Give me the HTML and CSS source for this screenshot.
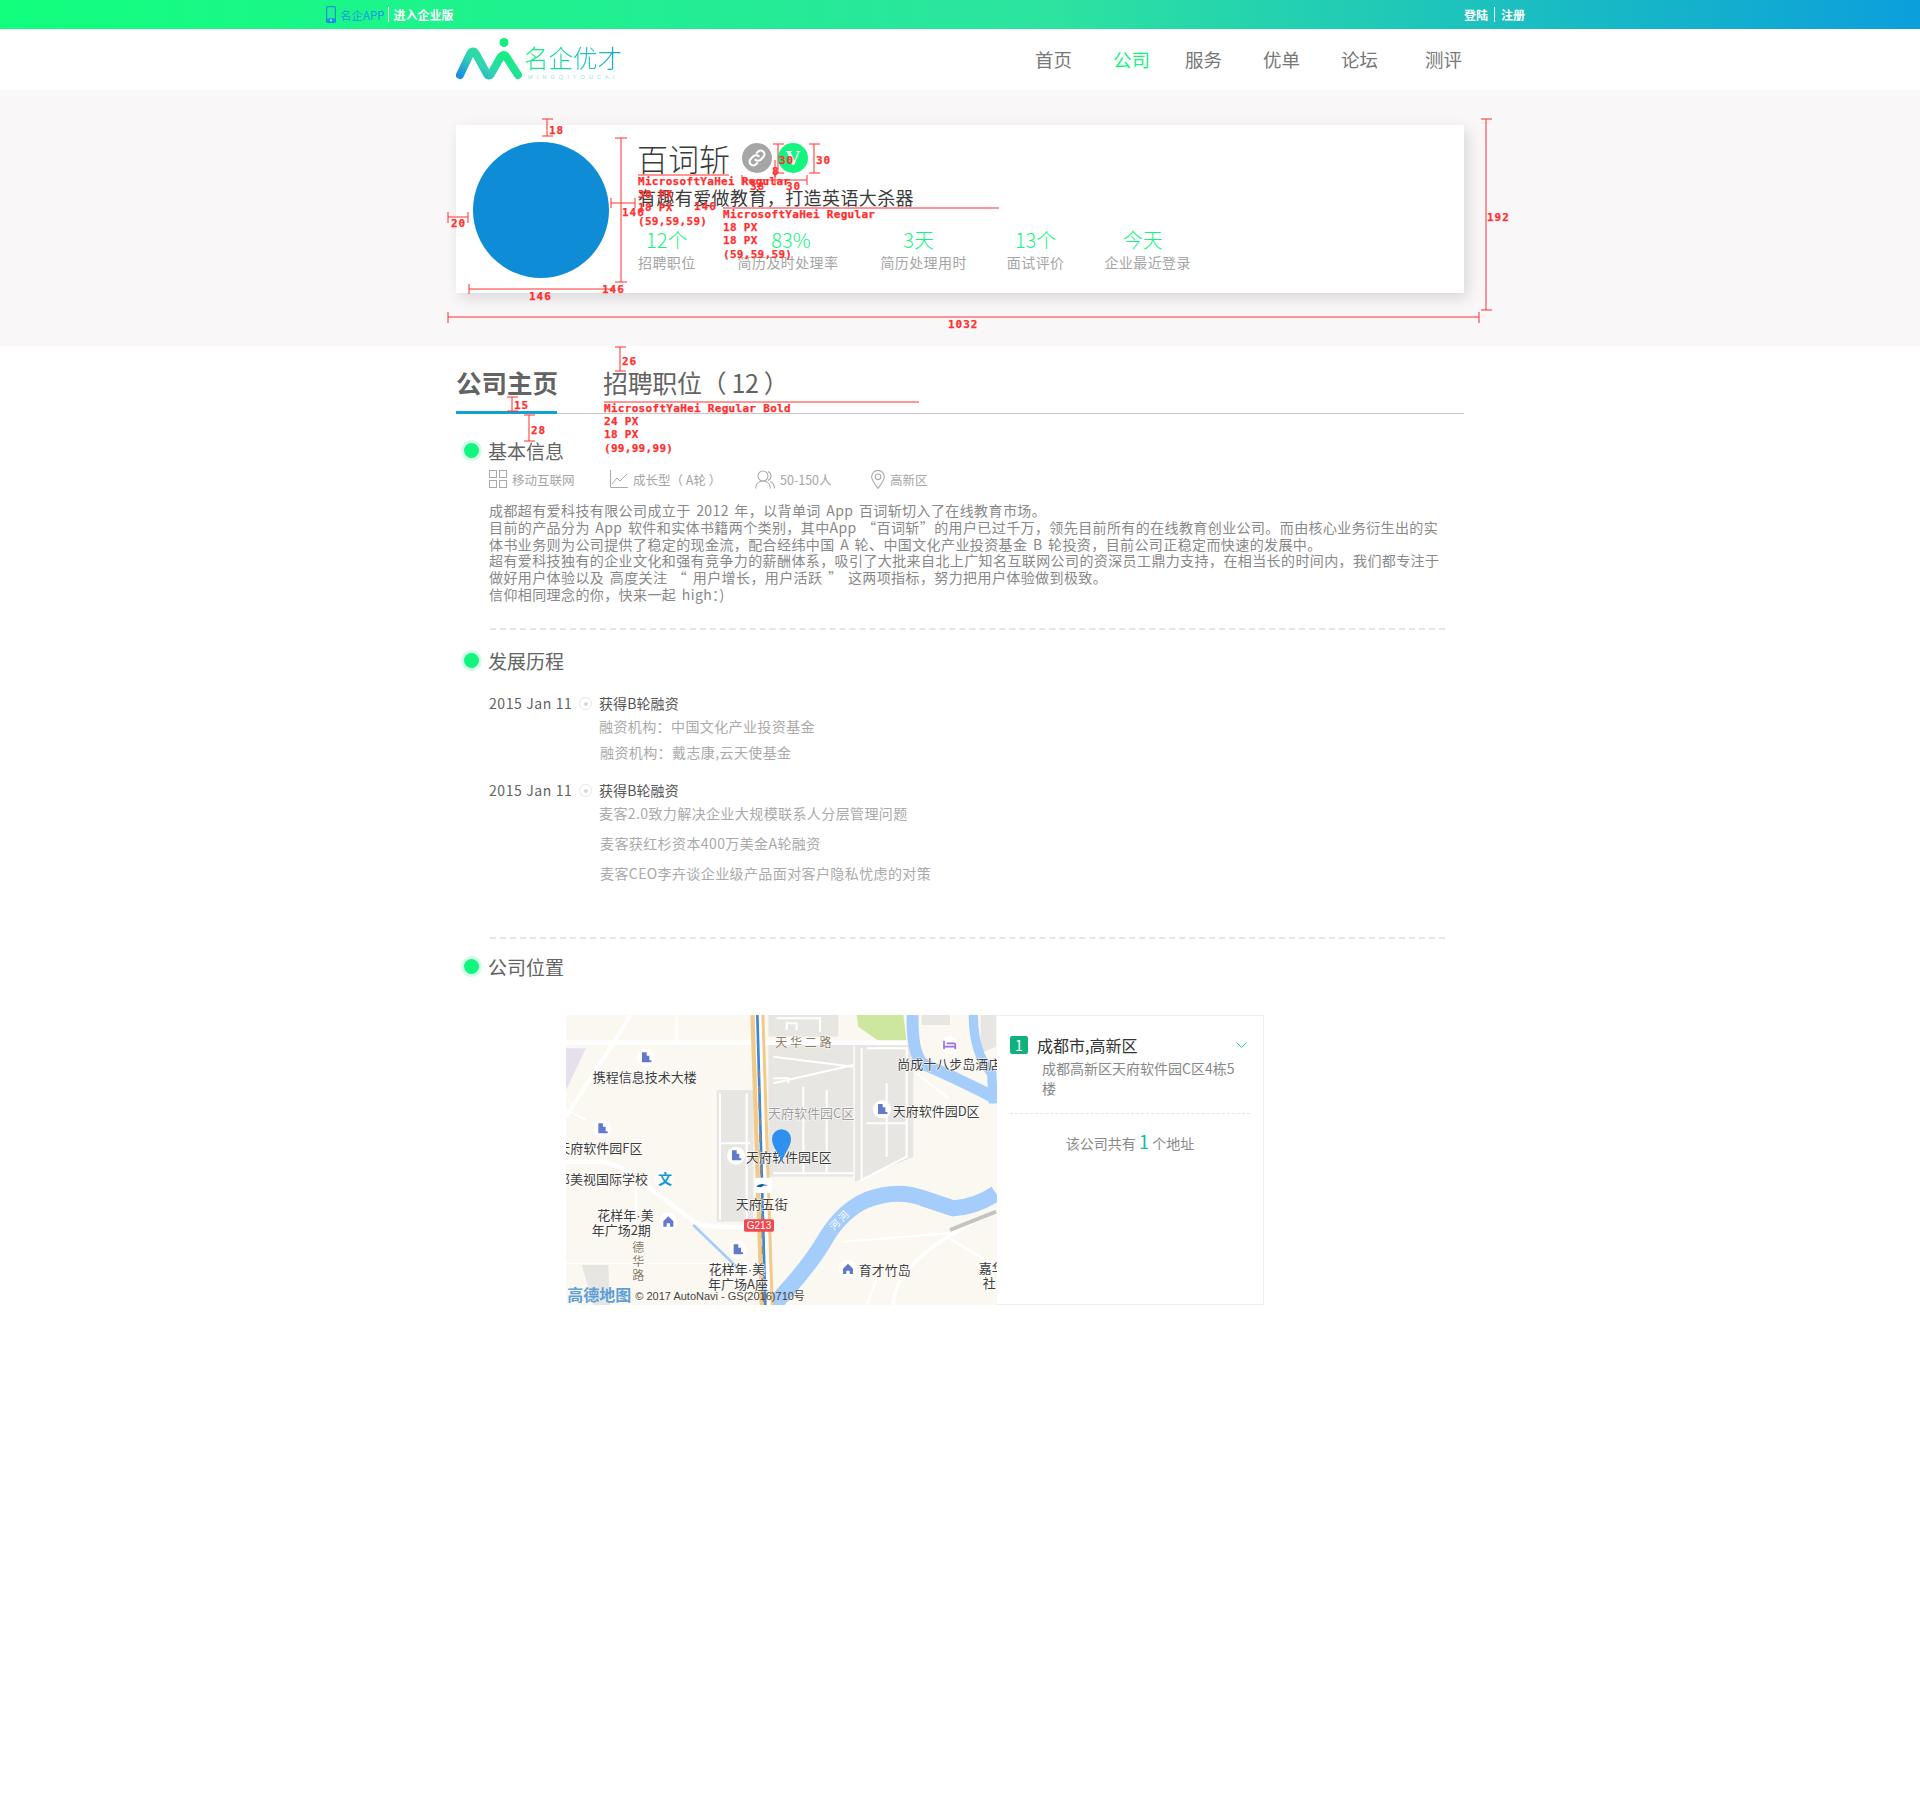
FILE: index.html
```html
<!DOCTYPE html>
<html lang="zh-CN">
<head>
<meta charset="utf-8">
<title>百词斩 - 名企优才</title>
<link rel="stylesheet" href="styles.css">
</head>
<body>
<div class="page">
  <header class="topbar">
    <div class="topbar-left">
      <svg class="phone-icon" width="10" height="17" viewBox="0 0 10 17"><rect x="0.6" y="0.6" width="8.8" height="15.8" rx="1.2" fill="none" stroke="#1b8fe0" stroke-width="1.2"/><rect x="0.6" y="12.4" width="8.8" height="4" fill="#1b8fe0"/><rect x="4" y="13.6" width="2" height="1.6" fill="#9fe"/></svg>
      <a class="app-link">名企APP</a>
      <span class="top-sep"></span>
      <a class="ent-link">进入企业版</a>
    </div>
    <div class="topbar-right">
      <a class="auth-link">登陆</a>
      <span class="top-sep top-sep-auth"></span>
      <a class="auth-link">注册</a>
    </div>
  </header>

  <div class="mainnav">
    <div class="logo">
      <svg class="logo-mark" width="68" height="42" viewBox="0 0 68 42">
        <defs>
          <linearGradient id="lg" x1="0" y1="1" x2="1" y2="0.4">
            <stop offset="0" stop-color="#1b8fe0"/>
            <stop offset="0.45" stop-color="#33d3b4"/>
            <stop offset="1" stop-color="#14f07f"/>
          </linearGradient>
        </defs>
        <path d="M4 37 L14 16 Q17 11 20 16 L31 36 Q33 39 35 36 L44 20 Q48 14 51 20 L62 37" fill="none" stroke="url(#lg)" stroke-width="8" stroke-linecap="round" stroke-linejoin="round"/>
        <circle cx="48" cy="4.5" r="4.5" fill="#14ee80"/>
      </svg>
      <div class="logo-text">
        <span class="logo-cn">名企优才</span>
        <span class="logo-en">MINGQIYOUCAI</span>
      </div>
    </div>
    <nav class="menu">
      <a class="menu-item">首页</a>
      <a class="menu-item menu-active">公司</a>
      <a class="menu-item">服务</a>
      <a class="menu-item">优单</a>
      <a class="menu-item">论坛</a>
      <a class="menu-item menu-wide">测评</a>
    </nav>
  </div>

  <section class="hero">
    <div class="card">
      <div class="avatar"></div>
      <div class="info">
        <div class="name-row">
          <h1 class="name">百词斩</h1>
          <span class="badge badge-link">
            <svg width="20" height="20" viewBox="0 0 24 24" fill="none" stroke="#fff" stroke-width="2.6" stroke-linecap="round"><path d="M10 14a4.5 4.5 0 0 0 6.4 0l3.2-3.2a4.5 4.5 0 0 0-6.4-6.4l-1.4 1.4"/><path d="M14 10a4.5 4.5 0 0 0-6.4 0l-3.2 3.2a4.5 4.5 0 0 0 6.4 6.4l1.4-1.4"/></svg>
          </span>
          <span class="badge badge-v">V</span>
        </div>
        <p class="tagline">有趣有爱做教育，打造英语大杀器</p>
        <div class="stats">
          <div class="stat"><div class="stat-num">12个</div><div class="stat-label">招聘职位</div></div>
          <div class="stat stat-second"><div class="stat-num num-right">83%</div><div class="stat-label">简历及时处理率</div></div>
          <div class="stat"><div class="stat-num num-left">3天</div><div class="stat-label">简历处理用时</div></div>
          <div class="stat"><div class="stat-num">13个</div><div class="stat-label">面试评价</div></div>
          <div class="stat"><div class="stat-num num-left">今天</div><div class="stat-label">企业最近登录</div></div>
        </div>
      </div>
    </div>
  </section>

  <main class="content">
    <div class="tabs">
      <a class="tab tab-active">公司主页</a>
      <a class="tab tab-jobs">招聘职位（ 12 ）</a>
    </div>

    <section class="section section-basic">
      <h2 class="section-title">基本信息</h2>
      <div class="meta">
        <span class="meta-item meta-a">
          <svg width="18" height="18" viewBox="0 0 18 18" fill="none" stroke="#aaa"><rect x="0.5" y="0.5" width="7" height="7"/><rect x="10.5" y="0.5" width="7" height="7"/><rect x="0.5" y="10.5" width="7" height="7"/><rect x="10.5" y="10.5" width="7" height="7"/></svg>
          移动互联网
        </span>
        <span class="meta-item meta-b">
          <svg width="19" height="18" viewBox="0 0 19 18" fill="none" stroke="#aaa"><path d="M1.5 0v17.5H19"/><path d="M3 14l5-6 3 3 7-7"/></svg>
          成长型（ A轮 ）
        </span>
        <span class="meta-item meta-c">
          <svg width="20" height="19" viewBox="0 0 20 19" fill="none" stroke="#aaa" stroke-width="1.1"><circle cx="8" cy="6" r="5"/><path d="M0.6 18.5c0-4.6 3-7.5 7.4-7.5s7.4 2.9 7.4 7.5"/><path d="M13 1.4a5 5 0 0 1 0 9.2M15.5 11.5c2.4 1 3.9 3.400 3.900 7"/></svg>
          50-150人
        </span>
        <span class="meta-item meta-d">
          <svg width="14" height="19" viewBox="0 0 14 19" fill="none" stroke="#aaa" stroke-width="1.1"><path d="M7 18.400C3 13 .6 10 .6 6.800a6.400 6.400 0 0 1 12.800 0C13.400 10 11 13 7 18.400z"/><circle cx="7" cy="6.800" r="2.800"/></svg>
          高新区
        </span>
      </div>
      <p class="intro">成都超有爱科技有限公司成立于 2012 年，以背单词 App 百词斩切入了在线教育市场。<br>目前的产品分为 App 软件和实体书籍两个类别，其中App “百词斩”的用户已过千万，领先目前所有的在线教育创业公司。而由核心业务衍生出的实<br>体书业务则为公司提供了稳定的现金流，配合经纬中国 A 轮、中国文化产业投资基金 B 轮投资，目前公司正稳定而快速的发展中。<br>超有爱科技独有的企业文化和强有竞争力的薪酬体系，吸引了大批来自北上广知名互联网公司的资深员工鼎力支持，在相当长的时间内，我们都专注于<br>做好用户体验以及 高度关注 “ 用户增长，用户活跃 ” 这两项指标，努力把用户体验做到极致。<br>信仰相同理念的你，快来一起 high：)</p>
    </section>

    <section class="section section-history">
      <h2 class="section-title">发展历程</h2>
      <div class="timeline">
        <div class="event">
          <span class="event-date">2015 Jan 11</span>
          <span class="event-dot"></span>
          <div class="event-body">
            <div class="event-title">获得B轮融资</div>
            <div class="event-sub sub-first">融资机构：中国文化产业投资基金</div>
            <div class="event-sub sub-near">融资机构：戴志康,云天使基金</div>
          </div>
        </div>
        <div class="event">
          <span class="event-date">2015 Jan 11</span>
          <span class="event-dot"></span>
          <div class="event-body">
            <div class="event-title">获得B轮融资</div>
            <div class="event-sub sub-first">麦客2.0致力解决企业大规模联系人分层管理问题</div>
            <div class="event-sub sub-far">麦客获红杉资本400万美金A轮融资</div>
            <div class="event-sub sub-far">麦客CEO李卉谈企业级产品面对客户隐私忧虑的对策</div>
          </div>
        </div>
      </div>
    </section>

    <section class="section section-map">
      <h2 class="section-title">公司位置</h2>
      <div class="map-wrap">
        <svg class="map" width="431" height="290" viewBox="18 15 1293 870">
          <rect x="18" y="15" width="1293" height="870" fill="#fbf8f1"/>
          <polygon points="18,115 78,115 18,240" fill="#e6dfee"/>
          <polygon points="890,15 1030,15 1040,95 960,95 895,50" fill="#cde79f"/>
          <rect x="1085" y="15" width="85" height="30" fill="#e8e6e2"/>
          <polygon points="1262,15 1308,15 1308,110 1262,130" fill="#e8e6e2"/>
          <rect x="470" y="240" width="110" height="395" rx="6" fill="#e8e6e2"/>
          <rect x="625" y="15" width="210" height="65" fill="#e8e6e2"/>
          <rect x="625" y="105" width="255" height="395" fill="#e8e6e2"/>
          <polygon points="885,105 1060,105 1060,440 885,515" fill="#e8e6e2"/>
          <polygon points="65,765 145,765 150,885 100,885" fill="#e8e6e2"/>
          <g fill="none" stroke="#fff" stroke-width="6">
            <path d="M18 98H1040" stroke-width="14"/>
            <path d="M212 15L140 130L18 320" stroke-width="13"/>
            <path d="M18 455H120Q170 460 210 490L410 640Q430 652 550 652" stroke-width="14" stroke="#fff"/>
            <path d="M350 15V95M18 300l60 30M228 520V700"/>
            <path d="M18 760H560" stroke-width="4"/>
            <path d="M1000 885Q1000 780 1180 670L1308 600" stroke-width="12"/>
            <path d="M1160 680L1308 770M920 885L960 780M850 695L1170 670"/>
            <path d="M640 140L880 170M640 220L880 165M730 230V490M800 240V490M640 490H880M920 115H1040V440L905 510V115M980 220V440M920 340H1040M480 250V630M560 250V630M480 400H570"/>
            <path d="M650 25h130v40M680 60v-20h30v20M640 205h45v15M1070 190L1165 265"/>
          </g>
          <path d="M1170 660L1308 605" stroke="#c4c4c0" stroke-width="12" fill="none"/>
          <g fill="none" stroke="#a5cdfb">
            <path d="M632 895L690 830Q760 750 800 680Q850 600 920 570Q1010 535 1090 565L1180 595Q1250 590 1308 550" stroke-width="48"/>
            <path d="M1058 15Q1055 120 1085 160Q1180 200 1308 265" stroke-width="36"/>
            <path d="M1240 15Q1240 130 1295 190L1300 280" stroke-width="28"/>
            <path d="M400 645L550 790" stroke-width="8"/>
          </g>
          <path d="M592 15L620 885" stroke="#f1c98a" stroke-width="42" fill="none"/>
          <path d="M594 15L622 885" stroke="#fff" stroke-width="20" fill="none"/>
          <path d="M592 15L616 885" stroke="#3c86d8" stroke-width="8" fill="none"/>
          <path d="M596 180L612 885" stroke="#8a8a86" stroke-width="6" stroke-dasharray="24 24" fill="none"/>

          <g class="map-pois">
            <circle cx="258" cy="143" r="27" fill="#fff"/>
            <circle cx="127" cy="356" r="27" fill="#fff"/>
            <circle cx="528" cy="437" r="27" fill="#fff"/>
            <circle cx="966" cy="298" r="27" fill="#fff"/>
            <circle cx="1169" cy="105" r="27" fill="#fff"/>
            <circle cx="311" cy="507" r="27" fill="#fff"/>
            <circle cx="325" cy="634" r="27" fill="#fff"/>
            <circle cx="533" cy="719" r="27" fill="#fff"/>
            <circle cx="864" cy="776" r="27" fill="#fff"/>
          </g>
          <g fill="#6379c9">
            <path d="M246 157V127h14v10h8v14h6v6z"/>
            <path d="M115 370V340h14v10h8v14h6v6z"/>
            <path d="M516 451V421h14v10h8v14h6v6z"/>
            <path d="M954 312V282h14v10h8v14h6v6z"/>
            <path d="M521 733V703h14v10h8v14h6v6z"/>
            <path d="M310 650V634l15-15 15 15v16h-10v-10h-10v10z"/>
            <path d="M849 792V776l15-15 15 15v16h-10v-10h-10v10z"/>
          </g>
          <path d="M1152 92v26M1152 110h34v8M1160 100h22q4 0 4 6v4" fill="none" stroke="#9a6fe0" stroke-width="5"/>

          <text class="map-label" x="98" y="215">携程信息技术大楼</text>
          <text class="map-label" x="1012" y="176">尚成十八步岛酒店</text>
          <text class="map-label map-muted" x="624" y="323">天府软件园C区</text>
          <text class="map-label" x="998" y="317">天府软件园D区</text>
          <text class="map-label" x="-8" y="428">天府软件园F区</text>
          <text class="map-label" x="558" y="455">天府软件园E区</text>
          <text class="map-label" x="-9" y="523">邓美视国际学校</text>
          <text class="map-label" x="527" y="596">天府五街</text>
          <text class="map-label" x="112" y="630">花样年<tspan class="map-dot">·</tspan>美</text>
          <text class="map-label" x="95" y="674">年广场2期</text>
          <text class="map-label" x="446" y="792">花样年<tspan class="map-dot">·</tspan>美</text>
          <text class="map-label" x="444" y="837">年广场A座</text>
          <text class="map-label" x="896" y="794">育才竹岛</text>
          <text class="map-label" x="1256" y="788">嘉华</text>
          <text class="map-label" x="1268" y="835">社</text>
          <text class="map-road" x="646" y="110">天 华 二 路</text>
          <text class="map-road" x="217" y="727">德</text>
          <text class="map-road" x="217" y="768">华</text>
          <text class="map-road" x="217" y="810">路</text>
          <text class="map-river" transform="rotate(-45 830 640)" x="808" y="650">河 河</text>
          <text class="map-edu" x="294" y="523">文</text>

          <path d="M665 455C655 425 636 410 636 386a28.500 28.500 0 0 1 57 0C693 410 675 425 665 455z" fill="#2e90ef"/>
          <rect x="585" y="503" width="50" height="46" rx="5" fill="#fff"/>
          <path d="M588 530q14-16 42 0q-18-8-26 2z" fill="#14609f"/>
          <rect x="552" y="628" width="90" height="37" rx="5" fill="#f2484f"/>
          <text class="map-shield" x="597" y="656">G213</text>

          <text class="map-brand" x="22" y="872">高德地图</text>
          <text class="map-copy" x="226" y="871">© 2017 AutoNavi - GS(2016)710号</text>
        </svg>
        <aside class="map-panel">
          <div class="addr">
            <div class="addr-head">
              <span class="addr-num">1</span>
              <span class="addr-city">成都市,高新区</span>
              <svg class="addr-chevron" width="11" height="6" viewBox="0 0 11 6" fill="none" stroke="#21c39a" stroke-width="1"><path d="M.5.5l5 5 5-5"/></svg>
            </div>
            <p class="addr-text">成都高新区天府软件园C区4栋5楼</p>
          </div>
          <p class="addr-count">该公司共有 <b class="addr-total">1</b> 个地址</p>
        </aside>
      </div>
    </section>
  </main>

  <svg class="annotations" width="1920" height="1801" viewBox="0 0 1920 1801">
    <path class="ann-line" d="M547 119V136M542 119H553M542 136H553
      M448 217H468M448 212V223M468 212V223
      M611 203H635M611 198V208M635 198V208
      M621 138V282M615 138H627M615 282H627
      M469 289H615M469 284V294
      M448 317H1479M448 312V323M1479 312V323
      M1486 119V310M1481 119H1492M1481 310H1492
      M638 175H729M723 208H999
      M778 144V173M773 144H784M773 173H784
      M814 144V173M809 144H820M809 173H820
      M742 180H807M742 175V185M775 175V185M807 175V185M775 160V177
      M620 347V371M615 347H626M615 371H626
      M604 402H919
      M512 397V411M507 397H518M507 411H518
      M529 415V441M524 415H535M524 441H535"/>
    <text class="ann-num" x="549" y="134">18</text>
    <text class="ann-num" x="451" y="227">20</text>
    <text class="ann-num" x="622" y="216">146</text>
    <text class="ann-num" x="602" y="293">146</text>
    <text class="ann-num" x="694" y="210">146</text>
    <text class="ann-num" x="529" y="300">146</text>
    <text class="ann-num" x="948" y="328">1032</text>
    <text class="ann-num" x="1487" y="221">192</text>
    <text class="ann-num" x="779" y="164">30</text>
    <text class="ann-num" x="816" y="164">30</text>
    <text class="ann-num" x="750" y="190">38</text>
    <text class="ann-num" x="786" y="190">30</text>
    <text class="ann-num" x="772" y="175">8</text>
    <text class="ann-num" x="622" y="365">26</text>
    <text class="ann-num" x="514" y="409">15</text>
    <text class="ann-num" x="531" y="434">28</text>
    <text class="ann-text" x="638" y="185">MicrosoftYaHei Regular</text>
    <text class="ann-text" x="638" y="198">30 PX</text>
    <text class="ann-text" x="638" y="211">18 PX</text>
    <text class="ann-text" x="638" y="225">(59,59,59)</text>
    <text class="ann-text" x="723" y="218">MicrosoftYaHei Regular</text>
    <text class="ann-text" x="723" y="231">18 PX</text>
    <text class="ann-text" x="723" y="244">18 PX</text>
    <text class="ann-text" x="723" y="258">(59,59,59)</text>
    <text class="ann-text" x="604" y="412">MicrosoftYaHei Regular Bold</text>
    <text class="ann-text" x="604" y="425">24 PX</text>
    <text class="ann-text" x="604" y="438">18 PX</text>
    <text class="ann-text" x="604" y="452">(99,99,99)</text>
  </svg>
</div>
</body>
</html>
```

FILE: styles.css
```css
* { box-sizing: border-box; }
html, body { margin: 0; padding: 0; background: #fff; }
body { font-family: "Noto Sans CJK SC", "Noto Sans", sans-serif; color: #636363; }
a { color: inherit; text-decoration: none; }
h1, h2, p { margin: 0; font-weight: 400; }

.page { position: relative; width: 1920px; height: 1801px; overflow: hidden; }

/* top bar */
.topbar {
  display: flex; justify-content: space-between; align-items: center;
  height: 29px; padding: 0 395px 0 326px;
  background: linear-gradient(90deg, #12ff7e 0%, #2ce3a0 55%, #0c9fdc 100%);
  line-height: 16px;
}
.topbar-left, .topbar-right { display: flex; align-items: center; }
.phone-icon { margin-right: 4px; }
.app-link { color: #1b9be0; font-size: 11.5px; }
.ent-link { color: #fff; font-weight: 700; font-size: 12px; }
.auth-link { color: #fff; font-weight: 700; font-size: 12px; }
.top-sep { width: 1px; height: 15px; background: #fff; margin: 0 5px 0 3px; }
.top-sep-auth { margin: 0 6px; }

/* main nav */
.mainnav { display: flex; align-items: flex-start; height: 61px; padding-left: 456px; }
.logo { display: flex; margin-top: 9px; }
.logo-mark { display: block; }
.logo-text { display: flex; flex-direction: column; margin: 6px 0 0 0; width: 100px; }
.logo-cn {
  font-size: 24.5px; line-height: 27px; font-weight: 300;
  background: linear-gradient(90deg, #14f07f, #1bb8c8 80%, #1796e0);
  -webkit-background-clip: text; background-clip: text; color: transparent;
}
.logo-en { margin-top: 2px; font-size: 5.5px; line-height: 8px; letter-spacing: 4.1px; color: #8fe8d0; padding-left: 4px; font-family: "Liberation Sans", sans-serif; white-space: nowrap; }
.menu { display: flex; margin-left: 411px; margin-top: 16px; font-size: 18.5px; line-height: 28px; color: #777; }
.menu-item { margin-right: 41px; }
.menu-active { color: #14f57f; margin-right: 35px; }
.menu-wide { margin-left: 6px; margin-right: 0; }

/* hero */
.hero { height: 256px; padding-top: 35px; background: #f9f7f8; }
.card {
  display: flex; width: 1008px; height: 168px; margin: 0 auto; padding: 17px 0 0 17px;
  background: #fff; box-shadow: 4px 5px 14px rgba(0,0,0,.13);
}
.avatar { flex: none; width: 136px; height: 136px; border-radius: 50%; background: #0f8cd6; }
.info { margin-left: 29px; }
.name-row { display: flex; align-items: center; height: 34px; margin: -1px 0 0 -1px; }
.name { font-size: 31px; line-height: 34px; color: #3b3b3b; font-weight: 300; }
.badge { display: flex; align-items: center; justify-content: center; width: 30px; height: 30px; border-radius: 50%; }
.badge-link { background: #a6a6a6; margin-left: 12px; }
.badge-v { background: #14f57f; margin-left: 6px; color: #fff; font: 700 21px/30px "Liberation Serif", serif; }
.tagline { margin-top: 9px; font-size: 18px; letter-spacing: .4px; line-height: 26px; color: #3b3b3b; white-space: nowrap; }
.stats { display: flex; gap: 40px; margin-top: 17px; text-align: center; }
.stat-second { margin: 0 2px; }
.stat-num { font-size: 20px; line-height: 26px; color: #14f57f; font-weight: 300; }
.num-right { padding-left: 6px; }
.num-left { padding-right: 10px; }
.stat-label { margin-top: -1px; font-size: 14px; letter-spacing: .4px; line-height: 20px; color: #a5a5a5; white-space: nowrap; }

/* content */
.content { width: 1008px; margin: 0 auto; }
.tabs {
  display: flex; height: 68px; padding-top: 18px;
  border-bottom: 1px solid #c8c8c8; font-size: 25px; line-height: 36px; color: #636363;
}
.tab { height: 50px; white-space: nowrap; }
.tab-active { width: 101px; font-size: 25.5px; font-weight: 700; border-bottom: 3px solid #0fa2d2; margin-right: 46px; }
.tab-jobs { letter-spacing: -.35px; }

.section { padding-left: 32px; }
.section-title { position: relative; font-size: 19px; line-height: 26px; color: #636363; }
.section-title::before {
  content: ""; position: absolute; left: -24px; top: 5px; width: 15px; height: 15px; border-radius: 50%;
  background: #12f57f; box-shadow: 0 0 0 3px rgba(18,245,127,.18);
}
.section-basic { height: 214px; padding-top: 24px; }
.meta { display: flex; align-items: center; height: 22px; margin-top: 4px; font-size: 12.5px; color: #a5a5a5; }
.meta-item { display: flex; align-items: center; gap: 5px; white-space: nowrap; }
.meta-a { width: 120px; margin-left: 1px; }
.meta-b { width: 146px; }
.meta-c { width: 116px; }
.intro { margin: 12px 0 0 1px; font-size: 14px; letter-spacing: .4px; word-spacing: 2px; line-height: 16.8px; color: #888; white-space: nowrap; }

.section-history { padding-top: 18px; border-top: 2px dashed #e6e6e6; margin-left: 34px; padding-left: 0; width: 955px; height: 309px; }
.section-history .section-title { margin-left: -2px; }
.timeline { margin-top: 19px; }
.event { display: flex; align-items: flex-start; height: 87px; font-size: 14px; line-height: 20px; }
.event-date { width: 90px; margin-left: -1px; color: #636363; letter-spacing: .6px; white-space: nowrap; }
.event-dot { position: relative; flex: none; width: 13px; height: 13px; margin: 4px 7px 0 0; border-radius: 50%; border: 1px solid #e6e6e6; }
.event-dot::after { content: ""; position: absolute; left: 3.5px; top: 3.5px; width: 4px; height: 4px; border-radius: 50%; background: #d8d8d8; }
.event-title { color: #555; letter-spacing: .1px; }
.event-sub { color: #aaa; letter-spacing: .4px; white-space: nowrap; }
.sub-first { margin-top: 3px; }
.sub-near { margin: 6px 0 0 1px; }
.sub-far { margin: 10px 0 0 1px; }

.section-map { padding-top: 15px; margin-left: 34px; padding-left: 0; width: 955px; border-top: 2px dashed #e6e6e6; }
.section-map .section-title { margin-left: -2px; }
.map-wrap { display: flex; margin: 35px 0 0 76px; width: 698px; height: 290px; }
.map { display: block; flex: none; }
.map-label { font-size: 39px; fill: #3d3d3d; paint-order: stroke; stroke: #fff; stroke-width: 3px; }
.map-muted { fill: #9c9c9c; }
.map-dot { font-family: "Liberation Sans", sans-serif; }
.map-road { font-size: 36px; fill: #8c7a64; paint-order: stroke; stroke: #fff; stroke-width: 3px; }
.map-river { font-size: 30px; fill: #fff; }
.map-edu { font-size: 42px; fill: #0f9ad8; font-weight: 700; }
.map-shield { font-size: 30px; fill: #fff; text-anchor: middle; font-family: "Liberation Sans", sans-serif; }
.map-brand { font-size: 48px; fill: #5f9fd8; font-weight: 700; }
.map-copy { font-size: 33px; fill: #444; font-family: "Liberation Sans", "Noto Sans CJK SC", sans-serif; }

.map-panel { flex: none; width: 267px; height: 290px; padding: 19px 13px 0 13px; border: 1px solid #eee; border-left: 0; }
.addr { height: 79px; border-bottom: 1px dashed #e6e6e6; }
.addr-head { display: flex; align-items: center; height: 20px; }
.addr-num { width: 18px; height: 18px; border-radius: 2px; background: #0fb27f; color: #fff; font-size: 14px; line-height: 18px; text-align: center; }
.addr-city { margin-left: 9px; font-size: 16px; color: #333; flex: 1; }
.addr-chevron { margin-right: 3px; }
.addr-text { margin: 4px 0 0 32px; width: 200px; font-size: 14px; line-height: 19.5px; color: #888; }
.addr-count { margin-top: 15px; font-size: 14px; line-height: 24px; color: #888; text-align: center; }
.addr-total { font-size: 18px; font-weight: 400; color: #0fbf92; }

/* red measurement overlay */
.annotations { position: absolute; left: 0; top: 0; pointer-events: none; }
.ann-line { fill: none; stroke: #ff2f2f; stroke-width: 1; }
.ann-num, .ann-text { font-family: "DejaVu Sans Mono", monospace; font-weight: 700; font-size: 11px; fill: #ff2f2f; stroke: #ff2f2f; stroke-width: .25px; }
.ann-num { letter-spacing: 1px; }
.ann-text { letter-spacing: .3px; }
```
